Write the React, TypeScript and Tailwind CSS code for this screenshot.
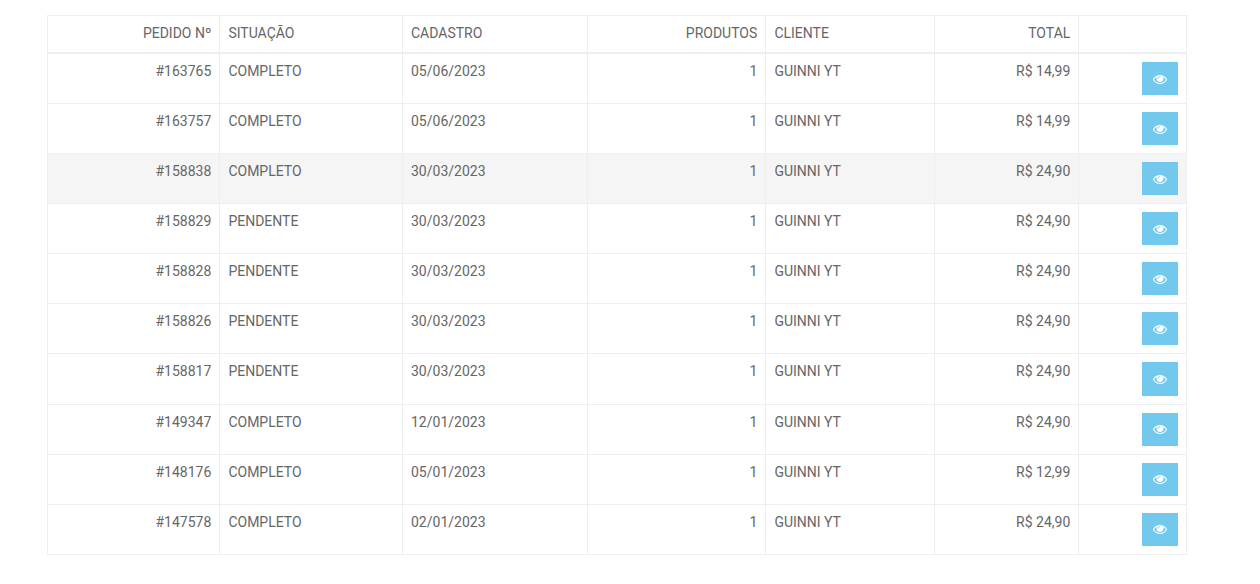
const orders = [
  { id: '#163765', status: 'COMPLETO', date: '05/06/2023', total: 'R$ 14,99' },
  { id: '#163757', status: 'COMPLETO', date: '05/06/2023', total: 'R$ 14,99' },
  { id: '#158838', status: 'COMPLETO', date: '30/03/2023', total: 'R$ 24,90', hover: true },
  { id: '#158829', status: 'PENDENTE', date: '30/03/2023', total: 'R$ 24,90' },
  { id: '#158828', status: 'PENDENTE', date: '30/03/2023', total: 'R$ 24,90' },
  { id: '#158826', status: 'PENDENTE', date: '30/03/2023', total: 'R$ 24,90' },
  { id: '#158817', status: 'PENDENTE', date: '30/03/2023', total: 'R$ 24,90' },
  { id: '#149347', status: 'COMPLETO', date: '12/01/2023', total: 'R$ 24,90' },
  { id: '#148176', status: 'COMPLETO', date: '05/01/2023', total: 'R$ 12,99' },
  { id: '#147578', status: 'COMPLETO', date: '02/01/2023', total: 'R$ 24,90' },
]

const th = 'border border-[#eeeeee] border-b-2 pr-[7.7px] pt-[7px] pb-[9px] font-normal leading-5'
const td = 'border border-[#eeeeee] pr-[7.7px] pt-[7px] pb-2 align-top leading-5'

// font awesome 4 eye
function EyeIcon() {
  return (
    <svg viewBox="0 0 1792 1792" className="h-[14px] w-[14px] fill-current">
      <path d="M1664 960q-152-236-381-353 61 104 61 225 0 185-131.500 316.500t-316.500 131.500-316.500-131.500-131.500-316.500q0-121 61-225-229 117-381 353 133 205 333.500 326.500t434.500 121.500 434.500-121.500 333.500-326.500zm-720-384q0-20-14-34t-34-14q-125 0-214.500 89.500t-89.500 214.500q0 20 14 34t34 14 34-14 14-34q0-86 61-147t147-61q20 0 34-14t14-34zm848 384q0 34-20 69-140 230-376.500 368.500t-499.500 138.500-499.500-139-376.500-368q-20-35-20-69t20-69q140-229 376.500-368t499.500-139 499.500 139 376.500 368q20 35 20 69z" />
    </svg>
  )
}

export default function App() {
  return (
    <div className="min-h-[584px] bg-white pt-[15px] pl-[47px] font-['Roboto',sans-serif] text-sm text-[#666666]">
      <table className="w-[1139px] table-fixed border-collapse">
        <colgroup>
          <col className="w-[172px]" />
          <col className="w-[183px]" />
          <col className="w-[185px]" />
          <col className="w-[178px]" />
          <col className="w-[169px]" />
          <col className="w-[144px]" />
          <col className="w-[108px]" />
        </colgroup>
        <thead>
          <tr>
            <th className={`${th} pl-2 text-right`}>PEDIDO Nº</th>
            <th className={`${th} pl-[8.4px] text-left`}>SITUAÇÃO</th>
            <th className={`${th} pl-2 text-left`}>CADASTRO</th>
            <th className={`${th} pl-2 text-right`}>PRODUTOS</th>
            <th className={`${th} pl-[8.4px] text-left`}>CLIENTE</th>
            <th className={`${th} pl-2 text-right`}>TOTAL</th>
            <th className={th}></th>
          </tr>
        </thead>
        <tbody>
          {orders.map((order) => (
            <tr key={order.id} className={order.hover ? 'bg-[#f5f5f5]' : ''}>
              <td className={`${td} pl-2 text-right`}>{order.id}</td>
              <td className={`${td} pl-[8.4px]`}>{order.status}</td>
              <td className={`${td} pl-2`}>{order.date}</td>
              <td className={`${td} pl-2 text-right`}>1</td>
              <td className={`${td} pl-[8.4px]`}>GUINNI YT</td>
              <td className={`${td} pl-2 text-right`}>{order.total}</td>
              <td className="border border-[#eeeeee] px-2 py-2 text-right align-top leading-5">
                <button className="inline-flex h-[33.08px] w-9 items-center justify-center bg-[#72c9ed] align-top text-white">
                  <EyeIcon />
                </button>
              </td>
            </tr>
          ))}
        </tbody>
      </table>
    </div>
  )
}
